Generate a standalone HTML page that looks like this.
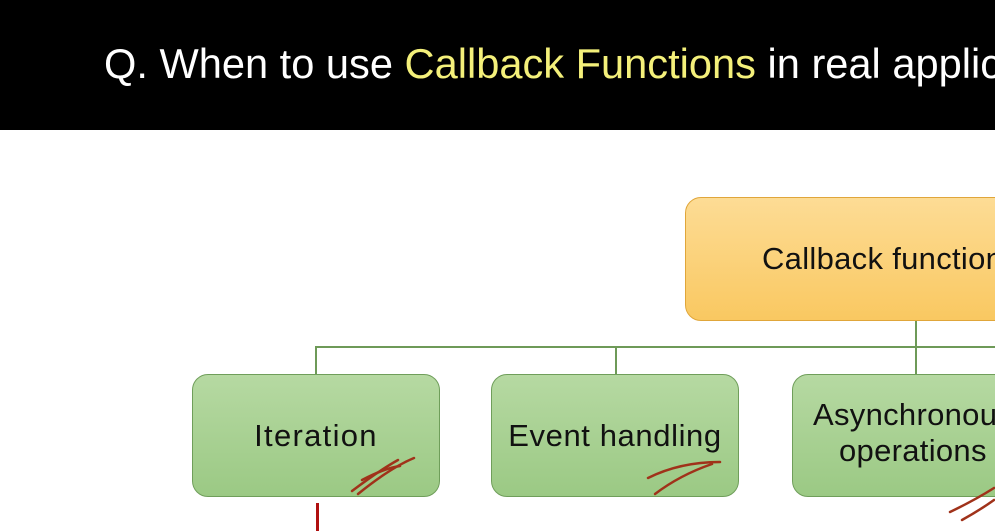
<!DOCTYPE html>
<html><head><style>
html,body{margin:0;padding:0;}
body{width:995px;height:531px;position:relative;overflow:hidden;background:#fff;font-family:"Liberation Sans",sans-serif;}
.hdr{position:absolute;left:0;top:0;width:995px;height:130px;background:#000;overflow:hidden;}
.title{position:absolute;left:104px;top:40px;font-size:41.6px;color:#fff;white-space:nowrap;line-height:48px;}
.y{color:#f4f07a;}
.box{position:absolute;box-sizing:border-box;border-radius:16px;display:flex;align-items:center;justify-content:center;text-align:center;color:#111;font-size:31px;line-height:36px;white-space:nowrap;letter-spacing:0.8px;overflow:hidden;}
.or{left:685px;top:197px;width:340px;height:124px;background:linear-gradient(#fddc95,#f9c861);border:1.5px solid #e0a63a;justify-content:flex-start;padding-left:76px;letter-spacing:0.3px;}
.gr{top:374px;width:248px;height:123px;background:linear-gradient(#b6d9a2,#9bc984);border:1.5px solid #6f9e5a;}
.l{position:absolute;background:#6e9a58;}
</style></head><body>
<div class="hdr"><div class="title">Q. When to use <span class="y">Callback Functions</span> in real applications?</div></div>
<div class="box or"><span>Callback functions</span></div>
<div class="l" style="left:915px;top:321px;width:2px;height:27px"></div>
<div class="l" style="left:315px;top:346px;width:700px;height:2px"></div>
<div class="l" style="left:315px;top:346px;width:2px;height:28px"></div>
<div class="l" style="left:615px;top:346px;width:2px;height:28px"></div>
<div class="l" style="left:915px;top:346px;width:2px;height:28px"></div>
<div class="box gr" style="left:192px;letter-spacing:1.3px"><span>Iteration</span></div>
<div class="box gr" style="left:491px;letter-spacing:0.6px"><span>Event handling</span></div>
<div class="box gr" style="left:792px;width:260px;padding-left:20px;display:block;padding-top:22px;text-align:left;line-height:36px;letter-spacing:0.3px"><div>Asynchronous</div><div style="padding-left:26px">operations</div></div>
<div style="position:absolute;left:316px;top:503px;width:3px;height:28px;background:#b01010"></div>
<svg style="position:absolute;left:0;top:0" width="995" height="531">
<g fill="none" stroke="#a0321a" stroke-width="2.5" stroke-linecap="round">
<path d="M352 491 Q380 470 398 460"/><path d="M358 494 Q390 468 414 458"/><path d="M362 480 Q385 468 400 466"/>
<path d="M648 478 Q680 462 720 462"/><path d="M655 494 Q680 475 712 464"/>
<path d="M950 512 Q975 500 994 488"/><path d="M962 520 Q980 510 994 500"/>
</g></svg>
</body></html>
